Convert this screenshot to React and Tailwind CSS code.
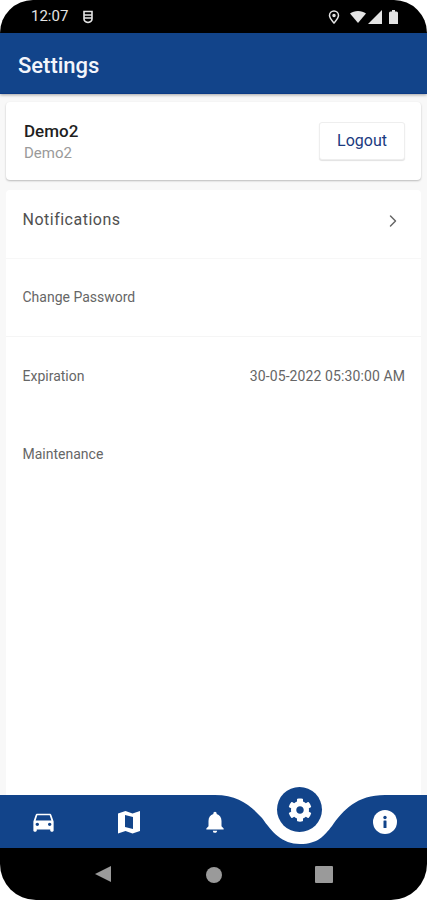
import React from 'react';
import { FaCog } from 'react-icons/fa';
import { MdDirectionsCar, MdNotifications } from 'react-icons/md';
import { ChevronRight } from 'lucide-react';

const StatusBar = () => (
  <div className="h-[33px] shrink-0 bg-black rounded-t-[36px] flex items-center justify-between pl-[31px] pr-[29px] text-[#e4e4e4]">
    <div className="flex items-center gap-[14px]">
      <span className="text-[15px] font-normal leading-none">12:07</span>
      {/* shield-ish notification icon */}
      <svg width="12" height="14" viewBox="0 0 12 14" fill="none" stroke="currentColor" strokeWidth="1.6">
        <path d="M2 1.500h8v7.500c0 2-2 3.200-4 3.500-2-.3-4-1.500-4-3.500z" />
        <path d="M2 5h8M2 8h8" />
      </svg>
    </div>
    <div className="flex items-center">
      <svg width="12" height="14" viewBox="0 0 12 14" fill="none" stroke="currentColor" strokeWidth="1.500">
        <path d="M6 13C3.500 10 1.500 8 1.500 5.500a4.500 4.500 0 0 1 9 0C10.500 8 8.500 10 6 13z" />
        <circle cx="6" cy="5.500" r="1" fill="currentColor" />
      </svg>
      <svg className="ml-[10px]" width="16" height="12" viewBox="0 0 16 12" fill="currentColor">
        <path d="M0 2.500C2 1 5 0 8 0s6 1 8 2.500L8 12z" />
      </svg>
      <svg className="ml-[2px]" width="14" height="14" viewBox="0 0 14 14" fill="currentColor">
        <path d="M14 0v14H0z" />
      </svg>
      <svg className="ml-[7px]" width="9" height="14" viewBox="0 0 9 14" fill="currentColor">
        <path d="M3 0h3v1.500h1.500A1.500 1.500 0 0 1 9 3v11H0V3a1.500 1.500 0 0 1 1.500-1.500H3z" />
      </svg>
    </div>
  </div>
);

const Row = ({ label, className, children }) => (
  <div className={`h-[78px] flex items-center justify-between pl-[16.500px] pr-[16px] ${className || ''}`}>
    <span className="text-[14px] text-[#666666]">{label}</span>
    {children}
  </div>
);

const MapIcon = () => (
  <svg width="24" height="24" viewBox="0 0 24 24">
    <path d="M1 3.500l7.500-2.500 7 2.500L23 1v20l-7.500 2.500-7-2.500L1 23.500z" fill="#fff" />
    <path d="M8 5l8 2v12l-8-2z" fill="#12448a" />
  </svg>
);

const InfoIcon = () => (
  <svg width="24" height="24" viewBox="0 0 24 24">
    <circle cx="12" cy="12" r="12" fill="#fff" />
    <circle cx="12" cy="7.500" r="1.700" fill="#12448a" />
    <rect x="10.500" y="10.500" width="3" height="7.500" rx="0.500" fill="#12448a" />
  </svg>
);

const BottomNav = () => (
  <div className="relative h-[53px] shrink-0 bg-[#12448a] flex items-center text-white">
    {/* white notch under the active tab */}
    <svg className="absolute left-[200px] top-0" width="200" height="53" viewBox="0 0 200 53">
      <path d="M15 0C38 0 50 10 62 23 72 37 82 49 100 49 118 49 124 41 132 31 143 15 157 0 185 0z" fill="#fff" />
    </svg>
    <div className="absolute left-[277px] top-[-8px] w-[45px] h-[45px] rounded-full bg-[#12448a] flex items-center justify-center">
      <FaCog size={24} />
    </div>
    <div className="relative w-[86px] flex justify-center"><MdDirectionsCar size={27} /></div>
    <div className="relative w-[86px] flex justify-center"><MapIcon /></div>
    <div className="relative w-[85px] flex justify-center"><MdNotifications size={26} /></div>
    <div className="absolute left-[373px] top-[15px]"><InfoIcon /></div>
  </div>
);

const AndroidNav = () => (
  <div className="h-[52px] shrink-0 bg-black rounded-b-[36px] flex items-start pt-[18px]">
    <div className="ml-[95px] w-0 h-0 border-y-[8.500px] border-y-transparent border-r-[16px] border-r-[#9a9a9a]" />
    <div className="w-[16px] h-[16px] mt-[1px] rounded-full bg-[#9a9a9a] ml-[95px]" />
    <div className="w-[18px] h-[17px] rounded-[1px] bg-[#9a9a9a] ml-[93px]" />
  </div>
);

export default function App() {
  return (
    <div className="w-[427px] h-[900px] bg-white flex flex-col overflow-hidden font-['Roboto',sans-serif]">
      <StatusBar />

      <div className="h-[61px] shrink-0 bg-[#12448a] border-b border-[#0b3a86] flex items-center pl-[18px] pt-[6px] shadow-[0_1px_3px_rgba(0,0,0,0.35)] z-10">
        <h1 className="text-[22px] leading-none font-medium text-[#f3f5fb]">Settings</h1>
      </div>

      <main className="flex-1 min-h-0 bg-[#f8f8f8] px-[6px] pt-[8px] flex flex-col gap-[10px]">
        <section className="h-[78px] shrink-0 bg-white rounded-[4px] shadow-[0_1px_2px_rgba(0,0,0,0.25)] flex items-center justify-between pl-[18px] pr-[16px]">
          <div className="pt-[1px]">
            <div className="text-[17px] font-medium text-[#1f1f1f] leading-[22px]">Demo2</div>
            <div className="text-[15px] text-[#9a9a9a] leading-[22px]">Demo2</div>
          </div>
          <button className="w-[86px] h-[38px] bg-white rounded-[3px] border border-[#eeeeee] shadow-[0_1px_1px_rgba(0,0,0,0.12)] text-[16px] text-[#1b3a80]">
            Logout
          </button>
        </section>

        <section className="flex-1 bg-white rounded-t-[4px] flex flex-col">
          <div className="h-[69px] flex items-center justify-between pl-[16.500px] pr-[18px] pb-[8px] border-b border-[#f7f7f7]">
            <span className="text-[16px] text-[#505050] tracking-[0.5px]">Notifications</span>
            <ChevronRight size={20} strokeWidth={1.750} className="text-[#666666] mt-[2px]" />
          </div>
          <Row label="Change Password" className="border-b border-[#f5f5f5]" />
          <Row label="Expiration">
            <span className="text-[14px] text-[#666666] tracking-[0.1px]">30-05-2022 05:30:00 AM</span>
          </Row>
          <Row label="Maintenance" />
        </section>
      </main>

      <BottomNav />
      <AndroidNav />
    </div>
  );
}
